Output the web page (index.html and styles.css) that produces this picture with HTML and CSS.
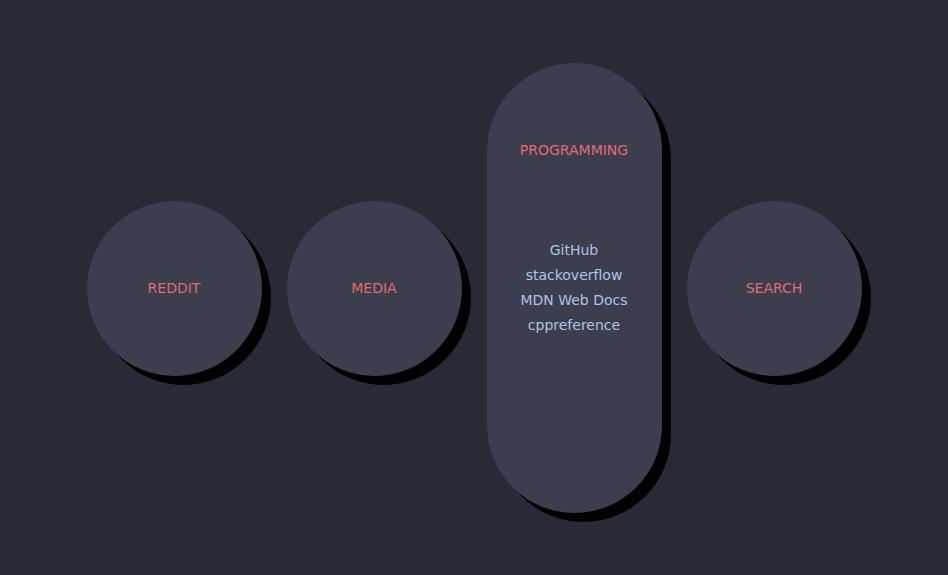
FILE: index.html
```html
<html>
<head>
<meta charset="UTF-8">
<title>Start</title>
<link rel="stylesheet" href="styles.css">
</head>
<body>
<div class="board">
    <div class="card circle"><span class="title">REDDIT</span></div>
    <div class="card circle"><span class="title">MEDIA</span></div>
    <div class="card pill">
        <span class="title">PROGRAMMING</span>
        <ul class="links">
            <li><a href="#">GitHub</a></li>
            <li><a href="#">stackoverflow</a></li>
            <li><a href="#">MDN Web Docs</a></li>
            <li><a href="#">cppreference</a></li>
        </ul>
    </div>
    <div class="card circle"><span class="title">SEARCH</span></div>
</div>
</body>
</html>
```

FILE: styles.css
```css
body {
    margin: 0;
    height: 575px;
    background: #282a36;
    font-family: "DejaVu Sans", sans-serif;
    font-size: 14px;
}

* {
    box-sizing: border-box;
}

.board {
    height: 100%;
    display: flex;
    flex-direction: row;
    align-items: center;
    justify-content: center;
    gap: 25px;
    padding-top: 1px;
}

.card {
    width: 175px;
    background: #3c3e4e;
    box-shadow: 9px 9px 0 #000;
}

.card .title {
    color: #e06c6c;
    line-height: 25px;
    text-align: center;
}

.circle {
    height: 175px;
    border-radius: 50%;
    display: flex;
    align-items: center;
    justify-content: center;
}

.pill {
    height: 450px;
    border-radius: 88px;
    display: flex;
    flex-direction: column;
    padding: 75px 0 100px;
}

.pill .links {
    list-style: none;
    margin: auto 0;
    padding: 0;
    text-align: center;
}

.pill .links li {
    line-height: 25px;
}

.pill .links a {
    color: #aec4e4;
    text-decoration: none;
}
```
